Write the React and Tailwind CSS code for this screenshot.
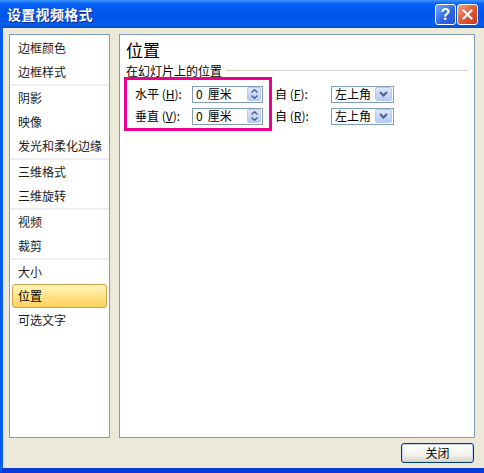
import React from "react";

const groups = [
  ["边框颜色", "边框样式"],
  ["阴影", "映像", "发光和柔化边缘"],
  ["三维格式", "三维旋转"],
  ["视频", "裁剪"],
  ["大小", "位置", "可选文字"],
];

function SpinButton() {
  return (
    <div className="w-[14px] h-[14px] my-px mr-px rounded-[2px] border border-[#b9c9ef] bg-[linear-gradient(to_bottom,#dbe6fd,#b7cbf6)] flex flex-col items-center justify-center gap-[2px]">
      <svg width="7" height="4" viewBox="0 0 7 4">
        <path d="M0.5 3.5 L3.5 0.7 L6.5 3.5" fill="none" stroke="#4d6185" strokeWidth="1.4" />
      </svg>
      <svg width="7" height="4" viewBox="0 0 7 4">
        <path d="M0.5 0.5 L3.5 3.3 L6.5 0.5" fill="none" stroke="#4d6185" strokeWidth="1.4" />
      </svg>
    </div>
  );
}

function DropButton() {
  return (
    <div className="w-[17px] h-[14px] my-px mr-px rounded-[2px] border border-[#b9c9ef] bg-[linear-gradient(to_bottom,#dbe6fd,#b7cbf6)] flex items-center justify-center">
      <svg width="9" height="6" viewBox="0 0 9 6">
        <path d="M1 1 L4.5 4.5 L8 1" fill="none" stroke="#4d6185" strokeWidth="2" />
      </svg>
    </div>
  );
}

function SpinInput() {
  return (
    <div className="w-[71px] h-[17px] border border-[#7f9db9] bg-white flex items-center">
      <span className="pl-[3px] leading-none">0</span>
      <span className="pl-[5px] leading-none">厘米</span>
      <div className="ml-auto">
        <SpinButton />
      </div>
    </div>
  );
}

function Dropdown() {
  return (
    <div className="w-[63px] h-[17px] border border-[#7f9db9] bg-white flex items-center">
      <span className="pl-[3px] leading-none">左上角</span>
      <div className="ml-auto">
        <DropButton />
      </div>
    </div>
  );
}

export default function App() {
  return (
    <div className="w-[484px] h-[473px] flex flex-col bg-[#ece9d8] overflow-hidden text-[12px] text-black font-['Noto_Sans_CJK_SC','Noto_Sans',sans-serif]">
      {/* Title bar */}
      <div className="h-[28px] shrink-0 flex items-center pl-[7px] pr-[6px] bg-[linear-gradient(to_bottom,#3d95ff_0%,#0a66f5_12%,#0058ee_30%,#0056ea_70%,#005fe8_88%,#0048d8_100%)]">
        <span className="text-white font-bold text-[14px] leading-none tracking-[0.3px] [text-shadow:1px_1px_0_#0c2a8c]">
          设置视频格式
        </span>
        <div className="ml-auto flex gap-[1px] pt-[1px]">
          <div className="w-[21px] h-[21px] rounded-[3px] border border-white bg-[linear-gradient(135deg,#7aa4f9,#2d62e0_60%,#2457d6)] flex items-center justify-center">
            <span className="text-white font-bold text-[16px] leading-none font-['Liberation_Sans',sans-serif]">?</span>
          </div>
          <div className="w-[21px] h-[21px] rounded-[3px] border border-white bg-[linear-gradient(135deg,#f0a58a,#e0552f_55%,#c9391a)] flex items-center justify-center">
            <svg width="11" height="11" viewBox="0 0 11 11">
              <path d="M1.5 1.5 L9.5 9.5 M9.5 1.5 L1.5 9.5" stroke="white" strokeWidth="2.2" strokeLinecap="round" />
            </svg>
          </div>
        </div>
      </div>

      {/* Body */}
      <div className="flex-1 flex flex-col border-l-[3px] border-l-[#0a5cef] border-b-[5px] border-b-[#0a3bd8] pl-[6px] pr-[9px] pt-[6px]">
        <div className="flex gap-[9px] h-[404px]">
          {/* Category list */}
          <div className="w-[101px] border border-[#7f9db9] bg-white pt-px">
            {groups.map((items, gi) => (
              <div key={gi}>
                {gi > 0 && <div className="h-[2px] bg-[#efeff2]" />}
                {items.map((name) =>
                  name === "位置" ? (
                    <div
                      key={name}
                      className="h-[24px] mx-[2px] pl-[5px] flex items-center rounded-[3px] border border-[#c8a44c] bg-[linear-gradient(to_bottom,#fff3bd,#ffe38a_50%,#fcd25e)]"
                    >
                      {name}
                    </div>
                  ) : (
                    <div key={name} className="h-[24px] pl-[8px] flex items-center text-[#1a1a1a]">
                      {name}
                    </div>
                  )
                )}
              </div>
            ))}
          </div>

          {/* Settings pane */}
          <div className="flex-1 border border-[#7f9db9] bg-white">
            <div className="pl-[6px] pt-[5px] h-[27px] text-[17px] leading-[20px]">位置</div>
            <div className="mt-[1px] pl-[6px] pr-[6px] h-[15px] flex items-center gap-[4px]">
              <span className="leading-none">在幻灯片上的位置</span>
              <div className="flex-1 h-px bg-[#d5d2c2]" />
            </div>
            <div className="flex pl-[4px] -mt-[1px]">
              <div className="w-[148px] h-[54px] border-[3px] border-[#ec008c] pl-[8px] pt-[5px] flex flex-col gap-[4px]">
                <div className="flex items-center">
                  <span className="w-[57px]">
                    水平 (<u>H</u>):
                  </span>
                  <SpinInput />
                </div>
                <div className="flex items-center">
                  <span className="w-[57px]">
                    垂直 (<u>V</u>):
                  </span>
                  <SpinInput />
                </div>
              </div>
              <div className="pl-[3px] pt-[8px] flex flex-col gap-[4px]">
                <div className="flex items-center">
                  <span className="w-[56px]">
                    自 (<u>F</u>):
                  </span>
                  <Dropdown />
                </div>
                <div className="flex items-center">
                  <span className="w-[56px]">
                    自 (<u>R</u>):
                  </span>
                  <Dropdown />
                </div>
              </div>
            </div>
          </div>
        </div>

        <div className="flex justify-end mt-[5px] mr-px">
          <button className="w-[73px] h-[20px] rounded-[3px] border border-[#003c74] bg-[linear-gradient(to_bottom,#ffffff,#f3f2ec_60%,#d8d4c4)] shadow-[inset_0_0_0_1px_#c4d4f8] flex items-center justify-center leading-none">
            关闭
          </button>
        </div>
      </div>
    </div>
  );
}
